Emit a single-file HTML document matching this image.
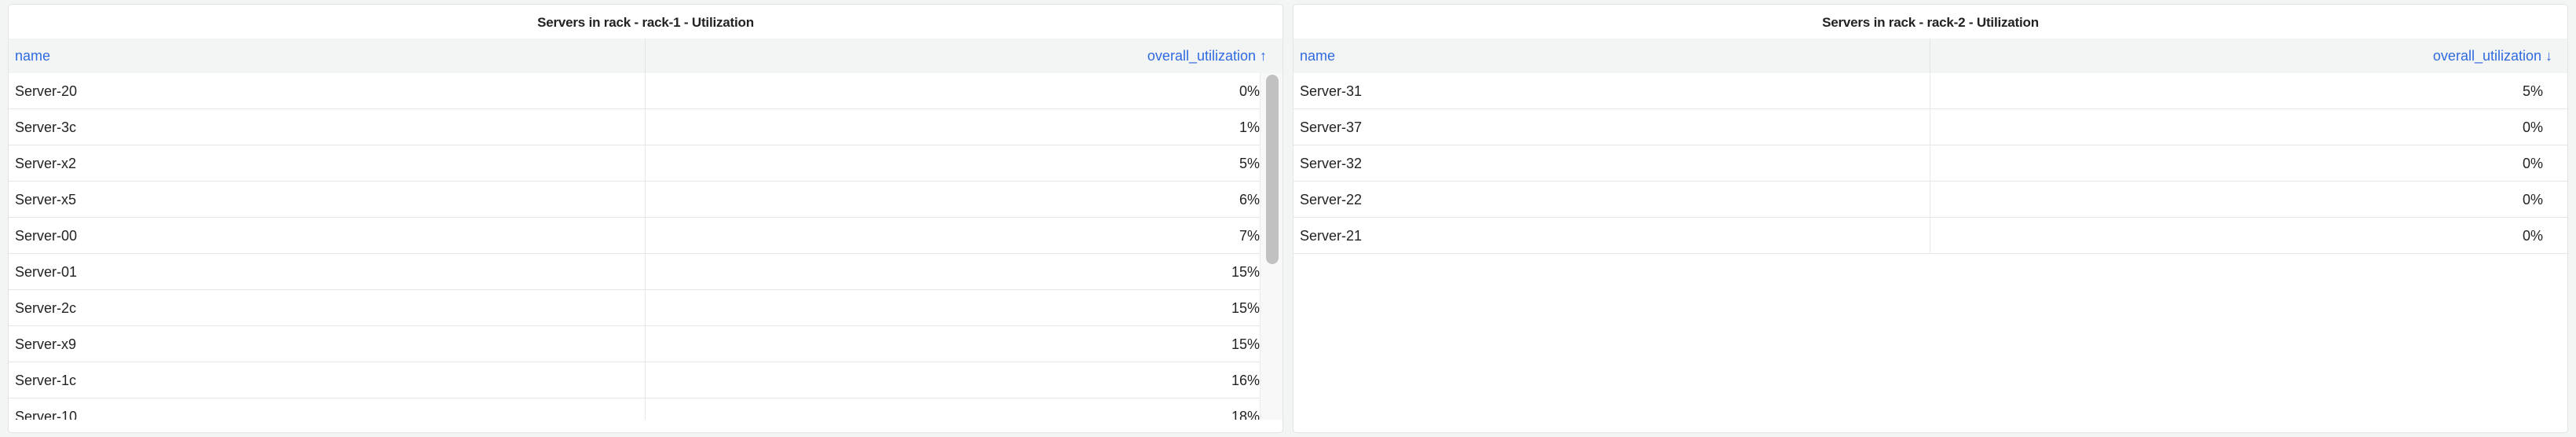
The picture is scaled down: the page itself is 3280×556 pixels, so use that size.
<!DOCTYPE html>
<html><head><meta charset="utf-8"><style>
*{box-sizing:border-box;margin:0;padding:0}
body{width:3280px;height:556px;background:#f3f4f4;font-family:"Liberation Sans",Arial,sans-serif;position:relative;overflow:hidden}
.p{position:absolute;top:5px;height:546px;background:#fff;border:1px solid #e3e5e5;border-radius:5px;overflow:hidden}
.t{position:absolute;top:0;left:0;right:0;height:43px;line-height:45px;text-align:center;font-size:17px;color:#222;font-weight:bold;letter-spacing:-0.2px}
.h{position:absolute;top:43px;left:0;right:0;height:44px;background:#f3f4f4;color:#2f6ae0;font-size:18px;line-height:44px}
.h .a{position:absolute;left:8px}
.h .b{position:absolute;text-align:right}
.h .d{position:absolute;left:810px;top:0;width:1px;height:44px;background:#e2e4e4}
.r{position:absolute;left:0;height:46px;border-bottom:1.5px solid #e6e6e6;font-size:18px;color:#222;line-height:46px}
.r .a{position:absolute;left:8px}
.r .b{position:absolute;text-align:right}
</style></head><body>
<div class="p" style="left:10px;width:1624px">
<div class="t">Servers in rack - rack-1 - Utilization</div>
<div class="h"><div class="d"></div><span class="a">name</span><span class="b" style="right:20px">overall_utilization ↑</span></div>
<div style="position:absolute;top:87px;left:0;width:1593px;height:441px;overflow:hidden" id="b1"></div>
<div style="position:absolute;top:87px;left:1593px;width:30px;height:441px;background:#f8f8f8;border-left:1px solid #ececec"></div>
<div style="position:absolute;top:89px;left:1601px;width:16px;height:241px;background:#c1c1c1;border-radius:8px"></div>
</div>
<div class="p" style="left:1646px;width:1624px">
<div class="t">Servers in rack - rack-2 - Utilization</div>
<div class="h"><div class="d"></div><span class="a">name</span><span class="b" style="right:19px">overall_utilization ↓</span></div>
<div style="position:absolute;top:87px;left:0;width:1622px;height:441px;overflow:hidden" id="b2"></div>
</div>
<script>
function fill(id,rows,w,pr){var b=document.getElementById(id),h='';rows.forEach(function(r,i){h+='<div class="r" style="top:'+(i*46)+'px;width:'+w+'px"><span class="a">'+r[0]+'</span><span class="b" style="right:'+pr+'px">'+r[1]+'</span><div style="position:absolute;left:810px;top:0;width:1px;height:46px;background:#e8e8e8"></div></div>'});b.innerHTML=h;}
fill('b1',[["Server-20","0%"],["Server-3c","1%"],["Server-x2","5%"],["Server-x5","6%"],["Server-00","7%"],["Server-01","15%"],["Server-2c","15%"],["Server-x9","15%"],["Server-1c","16%"],["Server-10","18%"]],1593,0);
fill('b2',[["Server-31","5%"],["Server-37","0%"],["Server-32","0%"],["Server-22","0%"],["Server-21","0%"]],1622,31);
</script>
</body></html>
